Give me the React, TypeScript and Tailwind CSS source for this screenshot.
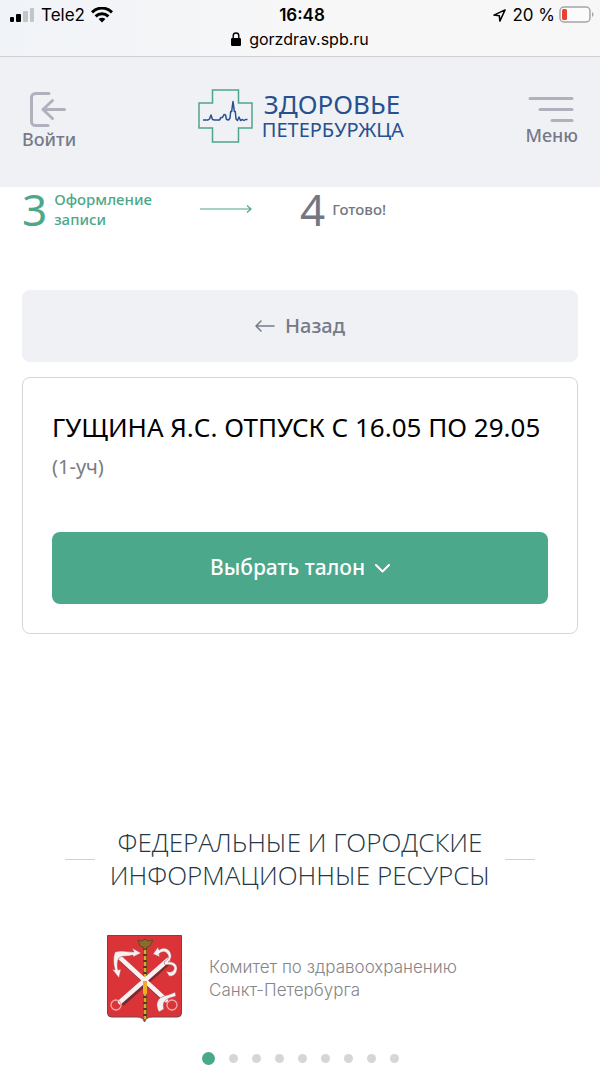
import type { ReactNode } from "react";

const slides = [1, 2, 3, 4, 5, 6, 7, 8, 9];

function StatusBar() {
  return (
    <div className="h-[57px] border-b border-[#cfcfd4] bg-linear-to-r from-[#f0f3f7] via-[#f7f7f8] to-[#f7f7f8] font-['Inter',sans-serif] text-[17px] leading-6 text-black">
      <div className="grid grid-cols-3 items-center pt-[3px] pr-[6px] pl-[10px]">
        <div className="flex items-center">
          <svg className="mr-[6px] h-4 w-[25px]" viewBox="0 0 25 16" aria-hidden="true">
            <rect x="0" y="10" width="4" height="5" rx="1" />
            <rect x="6" y="7" width="5" height="8" rx="1" />
            <rect x="13" y="4" width="5" height="11" rx="1" fill="#c4c5c7" />
            <rect x="20" y="1" width="4" height="14" rx="1" fill="#c4c5c7" />
          </svg>
          <span>Tele2</span>
          <svg className="ml-[6px] h-4 w-[22px]" viewBox="0 0 22 16" fill="none" stroke="#000" aria-hidden="true">
            <path d="M1 5.3C6.8-.3 15.2-.3 21 5.3" strokeWidth="3" />
            <path d="M4.6 9.3c3.7-3.5 9.1-3.5 12.8 0" strokeWidth="3" />
            <path d="M11 15.400l-3.400-3.500c1.900-1.700 4.900-1.700 6.800 0z" fill="#000" stroke="none" />
          </svg>
        </div>
        <div className="text-center font-semibold">16:48</div>
        <div className="flex items-center justify-end">
          <svg className="mr-[6px] h-[13px] w-[13px]" viewBox="0 0 14 14" fill="none" stroke="#000" strokeWidth="1.6" strokeLinejoin="round" aria-hidden="true">
            <path d="M13 1L1 6.6l5.800.6.6 5.800z" />
          </svg>
          <span>20 %</span>
          <svg className="ml-1 h-[18px] w-[35px]" viewBox="0 0 35 18" aria-hidden="true">
            <rect x="1" y="1" width="30" height="15" rx="4" fill="#fbfbfb" stroke="#a5a5a8" strokeWidth="1.5" />
            <rect x="3" y="3" width="5" height="11" rx="1.5" fill="#e8432e" />
            <path d="M33 6c2 1 2 4 0 5z" fill="#a5a5a8" />
          </svg>
        </div>
      </div>
      <div className="flex items-center justify-center gap-2 text-[16px]">
        <svg className="h-[14px] w-[10px]" viewBox="0 0 10 14" aria-hidden="true">
          <rect x="0" y="6" width="10" height="8" rx="1.2" />
          <path d="M2.2 7V3.8a2.8 2.8 0 0 1 5.6 0V7" fill="none" stroke="#000" strokeWidth="1.4" />
        </svg>
        <span>gorzdrav.spb.ru</span>
      </div>
    </div>
  );
}

function Logo() {
  return (
    <a href="#" className="flex items-center gap-[9px] font-normal text-[#27508f]">
      <svg className="h-[54px] w-[55px]" viewBox="0 0 55 54" fill="none" aria-hidden="true">
        <path d="M14.5 1h26v13H54v25H40.500v14h-26V39H1V14h13.500z" stroke="#4ca78a" strokeWidth="1.500" />
        <path
          d="M5 31h5l1.500-1 1.500-4 1.500 4.500 2 .5h5l1.500-2.500h1.500l1.500-3 1.500.5 1 4.500 2 .5 1.500-2 .7-6.500h1l.6-5 .7-5 .7 5 .6 5h1l.7 7.500 1.500 1.500 1.500-3.500 1.500 3.500 2-1 1.500 1 1.500-1h2"
          stroke="#27508f"
          strokeWidth="1.500"
          strokeLinejoin="round"
        />
      </svg>
      <span className="flex flex-col">
        <span className="pl-[2px] text-[26px] leading-7">ЗДОРОВЬЕ</span>
        <span className="text-[20px] leading-6">ПЕТЕРБУРЖЦА</span>
      </span>
    </a>
  );
}

function Header() {
  return (
    <header className="flex h-[130px] items-start justify-between bg-[#f0f1f5] px-[22px] pt-8 text-[18px] leading-6 font-medium text-[#757a89]">
      <button type="button" className="mt-[3px] flex flex-col items-start">
        <svg className="ml-2 h-[35px] w-[36px]" viewBox="0 0 36 35" fill="none" stroke="#afb1bd" strokeWidth="3" strokeLinecap="round" strokeLinejoin="round" aria-hidden="true">
          <path d="M19 1.500H5.500a4 4 0 0 0-4 4v24a4 4 0 0 0 4 4H18" />
          <path d="M34.500 17.500H13M22.500 8.500l-9.500 9 9.500 9" />
        </svg>
        <span>Войти</span>
      </button>
      <Logo />
      <button type="button" className="mt-2 flex flex-col items-end">
        <svg className="mr-1 h-[26px] w-[46px]" viewBox="0 0 46 26" fill="none" stroke="#afb1bd" strokeWidth="3" strokeLinecap="round" aria-hidden="true">
          <path d="M2 1.500h42M12 12.500h32M24 23.500h20" />
        </svg>
        <span>Меню</span>
      </button>
    </header>
  );
}

interface StepProps {
  number: number;
  active?: boolean;
  children: ReactNode;
}

function Step({ number, active, children }: StepProps) {
  return (
    <li className={`flex items-center gap-[7px] ${active ? "text-[#4ba88b]" : "text-[#737781]"}`}>
      <span className="text-[44px] leading-10">{number}</span>
      <span className="text-[15px] leading-5 font-medium">{children}</span>
    </li>
  );
}

function Steps() {
  return (
    <ol className="grid grid-cols-[178px_100px_1fr] items-center px-[22px] pt-[2px]">
      <Step number={3} active>
        Оформление
        <br />
        записи
      </Step>
      <li aria-hidden="true">
        <svg className="h-2 w-[52px]" viewBox="0 0 52 8" fill="none" stroke="#4ba88b" strokeWidth="1.200">
          <path d="M0 4h51M47 .5L51 4l-4 3.500" />
        </svg>
      </li>
      <Step number={4}>Готово!</Step>
    </ol>
  );
}

// Coat of arms of Saint Petersburg
function CoatOfArms() {
  return (
    <svg className="h-[88px] w-[75px] shrink-0" viewBox="0 0 75 88" fill="none" aria-hidden="true">
      <path d="M.5.5h74V78q0 4-4 4H45q-6 0-7.500 5Q36 82 30 82H4.500q-4 0-4-4z" fill="#db3438" stroke="#70474b" />
      <g stroke="#7b2b30" strokeWidth="5">
        <path d="M13 23l46 43M15 69l46-41" />
      </g>
      <path d="M38 5v79" stroke="#4c3a20" strokeWidth="3.600" />
      <path d="M38 9v75" stroke="#d9a92f" strokeWidth="2.600" strokeDasharray="4 2" />
      <path d="M31 5l4 1 3-2 3 2 5-1-3 6-3 1-2 3-2-3-3-1z" fill="#8c6a2b" stroke="#614820" />
      <g stroke="#f7f1f2" strokeLinecap="round" strokeLinejoin="round">
        <path d="M10 20l49 45M13 67l48-42" strokeWidth="4.500" />
      </g>
      <g fill="#f7f1f2" stroke="#a84349" strokeWidth=".5">
        <path d="M8 17c7-2 12 0 19 0l-2-4 9 5-8 4v-2c-6 2-10 0-14 3-2 3-2 8-1 12l3-1-2 9-7-9 3 1C6 28 6 22 8 17z" />
        <path d="M46 19l5-7 1 3c5-4 11-1 12 4 1 4-1 6-3 8 6-1 10 3 9 8-1 4-4 7-8 6l-3-5c4 2 7 1 8-2 1-4-4-5-9-4l-1-3c4-2 5-4 4-7-2-4-6-4-9-1l1 3z" />
        <path d="M52 77c-4-7-2-13 3-15 4-2 8-2 13-5l1 4c-5 2-9 2-11 5-2 2-2 5-1 8z" />
      </g>
      <path d="M38 46v13" stroke="#f0ae24" strokeWidth="4" />
      <circle cx="9" cy="70" r="5" stroke="#eea9ac" strokeWidth="1.300" />
      <circle cx="65" cy="70" r="5" stroke="#eea9ac" strokeWidth="1.300" />
    </svg>
  );
}

function Resources() {
  return (
    <section className="mt-48">
      <div className="flex items-center justify-center gap-[15px]">
        <span className="h-px w-[30px] bg-[#cfd1d3]" />
        <h2 className="text-center font-['Open_Sans',sans-serif] text-[26px] leading-[33px] font-light text-[#233746]">
          ФЕДЕРАЛЬНЫЕ И ГОРОДСКИЕ
          <br />
          ИНФОРМАЦИОННЫЕ РЕСУРСЫ
        </h2>
        <span className="h-px w-[30px] bg-[#cfd1d3]" />
      </div>
      <a href="#" className="mt-[43px] flex items-center gap-[27px] pl-[107px] font-['Inter',sans-serif] text-[17px] leading-[23px] font-light text-[#85868a]">
        <CoatOfArms />
        <span>
          Комитет по здравоохранению
          <br />
          Санкт-Петербурга
        </span>
      </a>
      <div className="mt-7 flex h-[14px] items-center justify-center gap-[14px]">
        {slides.map((slide) => (
          <button
            key={slide}
            type="button"
            aria-label={`Слайд ${slide}`}
            className={slide === 1 ? "size-[13px] rounded-full bg-[#4ba88b]" : "size-[9px] rounded-full bg-[#d6d6d8]"}
          />
        ))}
      </div>
    </section>
  );
}

export default function App() {
  return (
    <div className="bg-white font-['Noto_Sans',sans-serif]">
      <StatusBar />
      <Header />
      <main>
        <Steps />
        <div className="mt-[61px] px-[22px]">
          <button type="button" className="flex h-[72px] w-full items-center justify-center gap-[10px] rounded-lg bg-[#f0f1f5] text-[20px] font-medium text-[#757a89]">
            <svg className="h-3 w-5" viewBox="0 0 20 12" fill="none" stroke="#757a89" strokeWidth="1.500" strokeLinecap="round" strokeLinejoin="round" aria-hidden="true">
              <path d="M19 6H1M6 1L1 6l5 5" />
            </svg>
            Назад
          </button>
          <section className="mt-[15px] rounded-lg border border-[#d5d6d9] px-[29px] pt-[29px] pb-[29px]">
            <h1 className="text-[26px] leading-10 text-black">ГУЩИНА Я.С. ОТПУСК С 16.05 ПО 29.05</h1>
            <p className="text-[20px] leading-10 text-[#797c83]">(1-уч)</p>
            <button type="button" className="mt-[45px] flex h-[72px] w-full items-center justify-center gap-[10px] rounded-lg bg-[#4ba88b] text-[21px] font-medium text-white">
              Выбрать талон
              <svg className="h-[9px] w-[15px]" viewBox="0 0 15 9" fill="none" stroke="currentColor" strokeWidth="2" strokeLinecap="round" strokeLinejoin="round" aria-hidden="true">
                <path d="M1 1l6.500 6.500L14 1" />
              </svg>
            </button>
          </section>
        </div>
        <Resources />
      </main>
    </div>
  );
}
